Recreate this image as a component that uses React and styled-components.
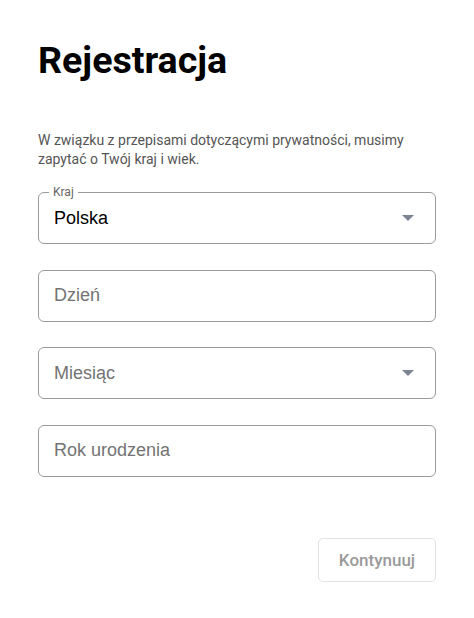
import React from "react";
import styled, { createGlobalStyle } from "styled-components";

const Global = createGlobalStyle`
  html, body { margin: 0; padding: 0; background: #fff; }
  body { font-family: Roboto, "Liberation Sans", sans-serif; }
  * { box-sizing: border-box; }
`;

const Page = styled.div`
  width: 474px;
  padding: 38px 38px 0 38px;
  display: flex;
  flex-direction: column;
`;

const Title = styled.h1`
  margin: 0;
  font-family: Roboto, sans-serif;
  font-weight: 700;
  font-size: 37.6px;
  line-height: 44px;
  color: #000;
`;

const Description = styled.p`
  margin: 49px 0 0 0;
  font-size: 14px;
  line-height: 19px;
  color: #555;
`;

const Fields = styled.div`
  margin-top: 23px;
  display: flex;
  flex-direction: column;
  gap: 25.5px;
`;

const Box = styled.div`
  height: 52px;
  border: 1px solid #9a9a9a;
  border-radius: 6px;
  padding: 0 21px 0 15px;
  display: flex;
  align-items: center;
  justify-content: space-between;
  position: relative;
`;

const Legend = styled.span`
  position: absolute;
  top: -8px;
  left: 10px;
  padding: 0 4px;
  background: #fff;
  font-size: 12px;
  line-height: 14px;
  color: #666;
`;

const Value = styled.span`
  font-family: "Liberation Sans", Arial, sans-serif;
  font-size: 18px;
  color: ${(p) => (p.$filled ? "#000" : "#737373")};
`;

const Arrow = styled.span`
  width: 0;
  height: 0;
  border-left: 6px solid transparent;
  border-right: 6px solid transparent;
  border-top: 6px solid #7a8591;
`;

const Footer = styled.div`
  display: flex;
  justify-content: flex-end;
  margin-top: 61px;
`;

const Button = styled.button`
  width: 118px;
  height: 44px;
  border: 1px solid #e2e2e2;
  border-radius: 5px;
  background: #fff;
  font-family: Roboto, sans-serif;
  font-weight: 500;
  font-size: 17px;
  color: #9a9a9a;
`;

function Field({ label, value, placeholder, select }) {
  return (
    <Box>
      {label && <Legend>{label}</Legend>}
      <Value $filled={!!value}>{value || placeholder}</Value>
      {select && <Arrow />}
    </Box>
  );
}

export default function App() {
  return (
    <Page>
      <Global />
      <Title>Rejestracja</Title>
      <Description>
        W związku z przepisami dotyczącymi prywatności, musimy zapytać o Twój kraj i wiek.
      </Description>
      <Fields>
        <Field label="Kraj" value="Polska" select />
        <Field placeholder="Dzień" />
        <Field placeholder="Miesiąc" select />
        <Field placeholder="Rok urodzenia" />
      </Fields>
      <Footer>
        <Button>Kontynuuj</Button>
      </Footer>
    </Page>
  );
}
